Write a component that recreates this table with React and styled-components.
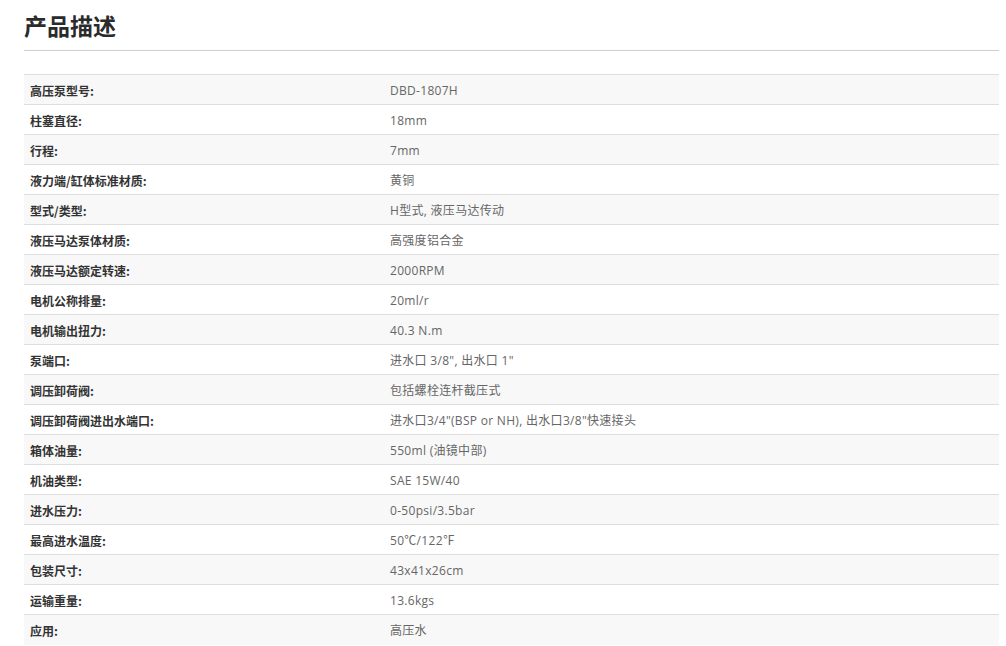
import styled, { createGlobalStyle } from "styled-components";

const specs = [
    ["高压泵型号:", "DBD-1807H"],
    ["柱塞直径:", "18mm"],
    ["行程:", "7mm"],
    ["液力端/缸体标准材质:", "黄铜"],
    ["型式/类型:", "H型式, 液压马达传动"],
    ["液压马达泵体材质:", "高强度铝合金"],
    ["液压马达额定转速:", "2000RPM"],
    ["电机公称排量:", "20ml/r"],
    ["电机输出扭力:", "40.3 N.m"],
    ["泵端口:", "进水口 3/8\", 出水口 1\""],
    ["调压卸荷阀:", "包括螺栓连杆截压式"],
    ["调压卸荷阀进出水端口:", "进水口3/4\"(BSP or NH), 出水口3/8\"快速接头"],
    ["箱体油量:", "550ml (油镜中部)"],
    ["机油类型:", "SAE 15W/40"],
    ["进水压力:", "0-50psi/3.5bar"],
    ["最高进水温度:", "50℃/122℉"],
    ["包装尺寸:", "43x41x26cm"],
    ["运输重量:", "13.6kgs"],
    ["应用:", "高压水"],
];

function App() {
    return (
        <>
            <GlobalStyle />
            <Page>
                <Title>产品描述</Title>
                <Divider />
                <SpecTable>
                    <tbody>
                        {specs.map(([label, value], i) => (
                            <Row key={label} striped={i % 2 === 0}>
                                <Label>{label}</Label>
                                <Value>{value}</Value>
                            </Row>
                        ))}
                    </tbody>
                </SpecTable>
            </Page>
        </>
    );
}

const GlobalStyle = createGlobalStyle`
    * {
        box-sizing: border-box;
    }
    body {
        margin: 0;
        background-color: #FFFFFF;
        font-family: "Open Sans", "Noto Sans CJK SC", sans-serif;
    }
`;

const Page = styled.div`
    padding: 9px 7px 0 24px;
`;

const Title = styled.h2`
    margin: 0;
    font-family: "Noto Sans CJK SC", sans-serif;
    font-weight: 700;
    font-size: 23px;
    line-height: 32px;
    color: #2b2b2b;
`;

const Divider = styled.hr`
    margin: 9px 0 0 0;
    border: none;
    border-top: 1px solid #cfcfcf;
`;

const SpecTable = styled.table`
    width: 100%;
    margin-top: 23px;
    border-collapse: collapse;
`;

const Row = styled.tr.withConfig({ shouldForwardProp: (p) => p !== "striped" })`
    height: 30px;
    border-top: 1px solid #dedede;
    background-color: ${(p) => (p.striped ? "#F8F8F8" : "#FFFFFF")};
`;

const Label = styled.td`
    width: 360px;
    padding: 1px 6px 0;
    font-family: "Noto Sans CJK SC", sans-serif;
    font-weight: 700;
    font-size: 12px;
    color: #333333;
    vertical-align: middle;
`;

const Value = styled.td`
    padding: 1px 6px 0;
    font-family: "Open Sans", "Noto Sans CJK SC", sans-serif;
    font-weight: 400;
    font-size: 12px;
    letter-spacing: 0.3px;
    color: #666666;
    vertical-align: middle;
`;

export default App;
